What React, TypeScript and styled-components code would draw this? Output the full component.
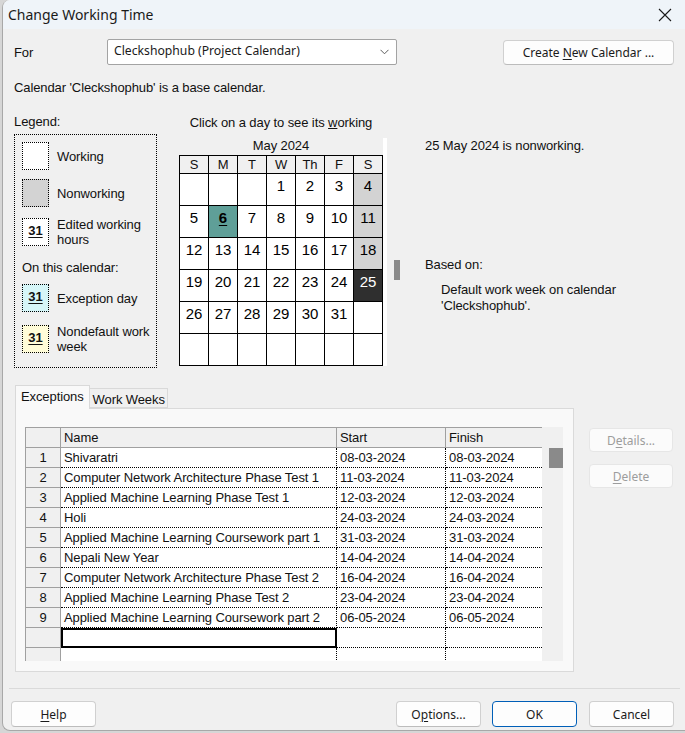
import React from 'react';
import styled, { createGlobalStyle } from 'styled-components';

type DayKind = 'work' | 'off' | 'selected' | 'exception';

interface Day {
  n?: number;
  kind: DayKind;
}

interface ExceptionRow {
  name: string;
  start: string;
  finish: string;
}

const TAHOMA = `"Liberation Sans", Arial, sans-serif`;
const SEGOE = `"Noto Sans", "Open Sans", sans-serif`;

const GlobalStyle = createGlobalStyle`
  html, body {
    margin: 0;
    padding: 0;
  }
  body {
    background: #d6d6d6;
    width: 685px;
    height: 733px;
    overflow: hidden;
  }
  * {
    box-sizing: border-box;
  }
`;

const Dialog = styled.div`
  margin-left: 2px;
  width: 690px;
  height: 731px;
  background: #f0f0f0;
  border-left: 1px solid #a8a8a8;
  border-bottom: 1px solid #a8a8a8;
  border-radius: 8px 0 0 8px;
  overflow: hidden;
  display: flex;
  flex-direction: column;
  font-family: ${TAHOMA};
  font-size: 13px;
  letter-spacing: -0.1px;
  color: #111;
`;

const TitleBar = styled.div`
  height: 29px;
  flex-shrink: 0;
  background: #eff4f9;
  display: flex;
  align-items: center;
  justify-content: space-between;
  padding: 0 20px 0 5px;
`;

const TitleText = styled.span`
  font-family: ${SEGOE};
  font-size: 14px;
  letter-spacing: 0;
  color: #1a1a1a;
`;

const Body = styled.div`
  width: 682px;
  padding: 0 11px;
  display: flex;
  flex-direction: column;
`;

const ForRow = styled.div`
  margin-top: 10px;
  height: 26px;
  display: flex;
  align-items: center;
`;

const ForLabel = styled.span`
  width: 93px;
`;

const Combo = styled.div`
  width: 290px;
  height: 26px;
  background: #fff;
  border: 1px solid #a3a3a3;
  border-radius: 2px;
  display: flex;
  align-items: center;
  justify-content: space-between;
  padding: 0 7px 3px 6px;
  font-family: ${SEGOE};
  font-size: 12.2px;
  letter-spacing: 0;
  color: #1a1a1a;
`;

const WinButton = styled.button<{ $width: number; $primary?: boolean; $disabled?: boolean }>`
  width: ${(p) => p.$width}px;
  height: 25px;
  padding: 0;
  background: ${(p) => (p.$disabled ? '#fbfbfb' : '#fdfdfd')};
  border: 1px solid ${(p) => (p.$primary ? '#005fb8' : p.$disabled ? '#e6e6e6' : '#d0d0d0')};
  border-bottom-color: ${(p) => (p.$primary ? '#005fb8' : p.$disabled ? '#e6e6e6' : '#bcbcbc')};
  border-radius: 4px;
  font-family: ${SEGOE};
  font-size: 12px;
  color: ${(p) => (p.$disabled ? '#9d9d9d' : '#1a1a1a')};
  display: flex;
  align-items: center;
  justify-content: center;
  flex-shrink: 0;

  u {
    text-underline-offset: 2px;
  }
`;

const Spacer = styled.div`
  flex: 1;
`;

const Note = styled.div`
  margin-top: 15px;
  line-height: 16px;
`;

const MainRow = styled.div`
  margin-top: 18px;
  display: flex;
  align-items: flex-start;
`;

const LegendCol = styled.div`
  width: 143px;
  display: flex;
  flex-direction: column;
`;

const SectionLabel = styled.div`
  line-height: 16px;
  margin-bottom: 4px;
`;

const LegendBox = styled.div`
  width: 143px;
  height: 234px;
  border: 1px dotted #000;
  padding: 7px 0 0 7px;
  display: flex;
  flex-direction: column;
`;

const LegendItem = styled.div<{ $gap?: number }>`
  display: flex;
  align-items: center;
  gap: 8px;
  margin-top: ${(p) => p.$gap ?? 0}px;
  line-height: 15px;
`;

const swatchFill = {
  work: '#fff',
  off: '#d3d3d3',
  edited: '#fff',
  exception: '#d6f6f8',
  nondefault: '#fffcd8',
};

const Swatch = styled.div<{ $fill: keyof typeof swatchFill }>`
  width: 27px;
  height: 28px;
  flex-shrink: 0;
  border: 1px dotted #000;
  background: ${(p) => swatchFill[p.$fill]};
  display: flex;
  justify-content: center;
  padding-top: 4px;
  font-weight: bold;
  font-size: 13px;
  line-height: 15px;

  u {
    text-underline-offset: 2px;
  }
`;

const SubLabel = styled.div`
  margin-top: 13px;
  line-height: 16px;
`;

const CalendarCol = styled.div`
  margin-left: 22px;
  display: flex;
  flex-direction: column;
`;

const Caption = styled.div`
  width: 204px;
  margin-top: 1px;
  text-align: center;
  line-height: 16px;
  white-space: nowrap;
`;

const ControlRow = styled.div`
  margin-top: 7px;
  display: flex;
`;

const MonthBlock = styled.div`
  width: 204px;
  display: flex;
  flex-direction: column;
`;

const MonthLabel = styled.div`
  height: 17px;
  line-height: 16px;
  text-align: center;
`;

const DayGrid = styled.div`
  display: grid;
  grid-template-columns: repeat(7, 28px);
  grid-template-rows: 17px repeat(6, 31px);
  gap: 1px;
  padding: 1px;
  background: #000;
`;

const DayHead = styled.div`
  background: #f0f0f0;
  text-align: center;
  line-height: 17px;
  font-size: 13px;
`;

const dayBg: Record<DayKind, string> = {
  work: '#fff',
  off: '#d3d3d3',
  selected: '#2f2f2f',
  exception: '#5f9f98',
};

const DayCell = styled.div<{ $kind: DayKind }>`
  background: ${(p) => dayBg[p.$kind]};
  color: ${(p) => (p.$kind === 'selected' ? '#fff' : '#000')};
  font-size: 15px;
  letter-spacing: 0;
  line-height: 16px;
  padding-top: 4px;
  text-align: center;
  font-weight: ${(p) => (p.$kind === 'exception' ? 'bold' : 'normal')};
  text-decoration: ${(p) => (p.$kind === 'exception' ? 'underline' : 'none')};
  text-underline-offset: 2px;
`;

const WhiteStrip = styled.div`
  width: 4px;
  height: 228px;
  background: #fff;
`;

const Track = styled.div`
  margin-left: 7px;
  width: 6px;
`;

const Thumb = styled.div<{ $top: number; $height: number }>`
  margin-top: ${(p) => p.$top}px;
  height: ${(p) => p.$height}px;
  width: 100%;
  background: #8a8a8a;
`;

const InfoCol = styled.div`
  margin-left: 25px;
  display: flex;
  flex-direction: column;
  line-height: 16px;
`;

const InfoLine = styled.div<{ $top?: number; $indent?: number }>`
  margin-top: ${(p) => p.$top ?? 0}px;
  padding-left: ${(p) => p.$indent ?? 0}px;
`;

const TabsRow = styled.div`
  margin-top: 17px;
  display: flex;
  align-items: flex-start;
`;

const TabsCol = styled.div`
  margin-left: 1px;
  width: 559px;
  display: flex;
  flex-direction: column;
`;

const TabStrip = styled.div`
  height: 23px;
  display: flex;
  align-items: flex-end;
`;

const Tab = styled.div<{ $active?: boolean }>`
  height: ${(p) => (p.$active ? 24 : 20)}px;
  margin-bottom: ${(p) => (p.$active ? -1 : 0)}px;
  padding: ${(p) => (p.$active ? '3px 5px 0 5px' : '3px 2px 0 3px')};
  background: ${(p) => (p.$active ? '#f9f9f9' : '#f0f0f0')};
  border: 1px solid #d9d9d9;
  border-bottom: ${(p) => (p.$active ? 'none' : '1px solid #d9d9d9')};
  border-left: ${(p) => (p.$active ? '1px solid #d9d9d9' : 'none')};
  position: relative;
  z-index: ${(p) => (p.$active ? 1 : 0)};
  line-height: 15px;
`;

const Panel = styled.div`
  height: 264px;
  background: #f9f9f9;
  border: 1px solid #dadada;
  padding: 18px 10px 10px 9px;
`;

const TableFrame = styled.div`
  display: flex;
  height: 234px;
`;

const Table = styled.div`
  width: 517px;
  height: 234px;
  background: #fff;
  border-left: 1px solid #a0a0a0;
  border-top: 1px solid #a0a0a0;
  overflow: hidden;
`;

const Row = styled.div`
  display: grid;
  grid-template-columns: 35px 276px 109px 96px;
  height: 20px;
`;

const HeadCell = styled.div<{ $last?: boolean }>`
  background: #f0f0f0;
  border-bottom: 1px solid #a0a0a0;
  border-right: ${(p) => (p.$last ? 'none' : '1px solid #a0a0a0')};
  padding-left: 3px;
  line-height: 19px;
`;

const NumCell = styled.div`
  background: #f0f0f0;
  border-right: 1px solid #a0a0a0;
  border-bottom: 1px solid #a0a0a0;
  text-align: center;
  line-height: 19px;
`;

const DataCell = styled.div<{ $last?: boolean; $focus?: boolean }>`
  border-bottom: 1px dotted #000;
  border-right: ${(p) => (p.$last ? 'none' : '1px dotted #000')};
  padding-left: 3px;
  line-height: 19px;
  white-space: nowrap;
  overflow: hidden;
  outline: ${(p) => (p.$focus ? '2px solid #000' : 'none')};
  outline-offset: -2px;
`;

const ScrollTrack = styled.div`
  width: 21px;
  height: 234px;
  background: #f0f0f0;
  padding-left: 7px;
`;

const SideButtons = styled.div`
  margin-left: 15px;
  margin-top: 43px;
  display: flex;
  flex-direction: column;
  gap: 12px;

  button {
    height: 24px;
  }
`;

const Separator = styled.div`
  margin: 16px -6px 0 -5px;
  height: 1px;
  background: #dadada;
`;

const Footer = styled.div`
  margin: 12px 0 0 -3px;
  height: 26px;
  display: flex;
  align-items: center;

  button {
    height: 26px;
  }
`;

const Chevron = () => (
  <svg width="9" height="6" viewBox="0 0 9 6" style={{ marginTop: 3 }}>
    <path d="M0.5 0.8 L4.5 4.8 L8.5 0.8" fill="none" stroke="#5c5c5c" strokeWidth="1" />
  </svg>
);

const CloseIcon = () => (
  <svg width="14" height="14" viewBox="0 0 14 14">
    <path d="M1 1 L13 13 M13 1 L1 13" stroke="#1a1a1a" strokeWidth="1.1" />
  </svg>
);

const weeks: Day[][] = (() => {
  const cells: Day[] = [];
  for (let i = 0; i < 3; i++) cells.push({ kind: 'work' });
  for (let d = 1; d <= 31; d++) {
    const col = cells.length % 7;
    let kind: DayKind = col === 6 ? 'off' : 'work';
    if (d === 25) kind = 'selected';
    if (d === 6) kind = 'exception';
    cells.push({ n: d, kind });
  }
  while (cells.length < 42) cells.push({ kind: 'work' });
  const out: Day[][] = [];
  for (let i = 0; i < 42; i += 7) out.push(cells.slice(i, i + 7));
  return out;
})();

const exceptions: ExceptionRow[] = [
  { name: 'Shivaratri', start: '08-03-2024', finish: '08-03-2024' },
  { name: 'Computer Network Architecture Phase Test 1', start: '11-03-2024', finish: '11-03-2024' },
  { name: 'Applied Machine Learning Phase Test 1', start: '12-03-2024', finish: '12-03-2024' },
  { name: 'Holi', start: '24-03-2024', finish: '24-03-2024' },
  { name: 'Applied Machine Learning Coursework part 1', start: '31-03-2024', finish: '31-03-2024' },
  { name: 'Nepali New Year', start: '14-04-2024', finish: '14-04-2024' },
  { name: 'Computer Network Architecture Phase Test 2', start: '16-04-2024', finish: '16-04-2024' },
  { name: 'Applied Machine Learning Phase Test 2', start: '23-04-2024', finish: '23-04-2024' },
  { name: 'Applied Machine Learning Coursework part 2', start: '06-05-2024', finish: '06-05-2024' },
];

const dayHeads = ['S', 'M', 'T', 'W', 'Th', 'F', 'S'];

const App: React.FC = () => {
  return (
    <>
      <GlobalStyle />
      <Dialog>
        <TitleBar>
          <TitleText>Change Working Time</TitleText>
          <CloseIcon />
        </TitleBar>
        <Body>
          <ForRow>
            <ForLabel>For</ForLabel>
            <Combo>
              <span>Cleckshophub (Project Calendar)</span>
              <Chevron />
            </Combo>
            <Spacer />
            <WinButton $width={171}>
              Create&nbsp;<u>N</u>ew Calendar ...
            </WinButton>
          </ForRow>

          <Note>Calendar 'Cleckshophub' is a base calendar.</Note>

          <MainRow>
            <LegendCol>
              <SectionLabel>Legend:</SectionLabel>
              <LegendBox>
                <LegendItem>
                  <Swatch $fill="work" />
                  Working
                </LegendItem>
                <LegendItem $gap={9}>
                  <Swatch $fill="off" />
                  Nonworking
                </LegendItem>
                <LegendItem $gap={10}>
                  <Swatch $fill="edited">
                    <u>31</u>
                  </Swatch>
                  <span>
                    Edited working
                    <br />
                    hours
                  </span>
                </LegendItem>
                <SubLabel>On this calendar:</SubLabel>
                <LegendItem $gap={8}>
                  <Swatch $fill="exception">
                    <u>31</u>
                  </Swatch>
                  Exception day
                </LegendItem>
                <LegendItem $gap={12}>
                  <Swatch $fill="nondefault">
                    <u>31</u>
                  </Swatch>
                  <span>
                    Nondefault work
                    <br />
                    week
                  </span>
                </LegendItem>
              </LegendBox>
            </LegendCol>

            <CalendarCol>
              <Caption>
                Click on a day to see its <u>w</u>orking
              </Caption>
              <ControlRow>
                <MonthBlock>
                  <MonthLabel>May 2024</MonthLabel>
                  <DayGrid>
                    {dayHeads.map((h, i) => (
                      <DayHead key={`h${i}`}>{h}</DayHead>
                    ))}
                    {weeks.flat().map((d, i) => (
                      <DayCell key={i} $kind={d.n ? d.kind : 'work'}>
                        {d.n ?? ''}
                      </DayCell>
                    ))}
                  </DayGrid>
                </MonthBlock>
                <WhiteStrip />
                <Track>
                  <Thumb $top={122} $height={20} />
                </Track>
              </ControlRow>
            </CalendarCol>

            <InfoCol>
              <InfoLine $top={24}>25 May 2024 is nonworking.</InfoLine>
              <InfoLine $top={103}>Based on:</InfoLine>
              <InfoLine $top={9} $indent={16}>
                Default work week on calendar
              </InfoLine>
              <InfoLine $indent={16}>'Cleckshophub'.</InfoLine>
            </InfoCol>
          </MainRow>

          <TabsRow>
            <TabsCol>
              <TabStrip>
                <Tab $active>Exceptions</Tab>
                <Tab>Work Weeks</Tab>
              </TabStrip>
              <Panel>
                <TableFrame>
                  <Table>
                    <Row>
                      <HeadCell />
                      <HeadCell>Name</HeadCell>
                      <HeadCell>Start</HeadCell>
                      <HeadCell $last>Finish</HeadCell>
                    </Row>
                    {exceptions.map((e, i) => (
                      <Row key={e.name + i}>
                        <NumCell>{i + 1}</NumCell>
                        <DataCell>{e.name}</DataCell>
                        <DataCell>{e.start}</DataCell>
                        <DataCell $last>{e.finish}</DataCell>
                      </Row>
                    ))}
                    {[0, 1].map((k) => (
                      <Row key={`empty${k}`}>
                        <NumCell />
                        <DataCell $focus={k === 0} />
                        <DataCell />
                        <DataCell $last />
                      </Row>
                    ))}
                  </Table>
                  <ScrollTrack>
                    <Thumb $top={21} $height={20} />
                  </ScrollTrack>
                </TableFrame>
              </Panel>
            </TabsCol>
            <SideButtons>
              <WinButton $width={84} $disabled>
                D<u>e</u>tails...
              </WinButton>
              <WinButton $width={84} $disabled>
                <u>D</u>elete
              </WinButton>
            </SideButtons>
          </TabsRow>

          <Separator />

          <Footer>
            <WinButton $width={85}>
              <u>H</u>elp
            </WinButton>
            <Spacer />
            <WinButton $width={85}>
              O<u>p</u>tions...
            </WinButton>
            <WinButton $width={85} $primary style={{ marginLeft: 11 }}>
              OK
            </WinButton>
            <WinButton $width={85} style={{ marginLeft: 12 }}>
              Cancel
            </WinButton>
          </Footer>
        </Body>
      </Dialog>
    </>
  );
};

export default App;
